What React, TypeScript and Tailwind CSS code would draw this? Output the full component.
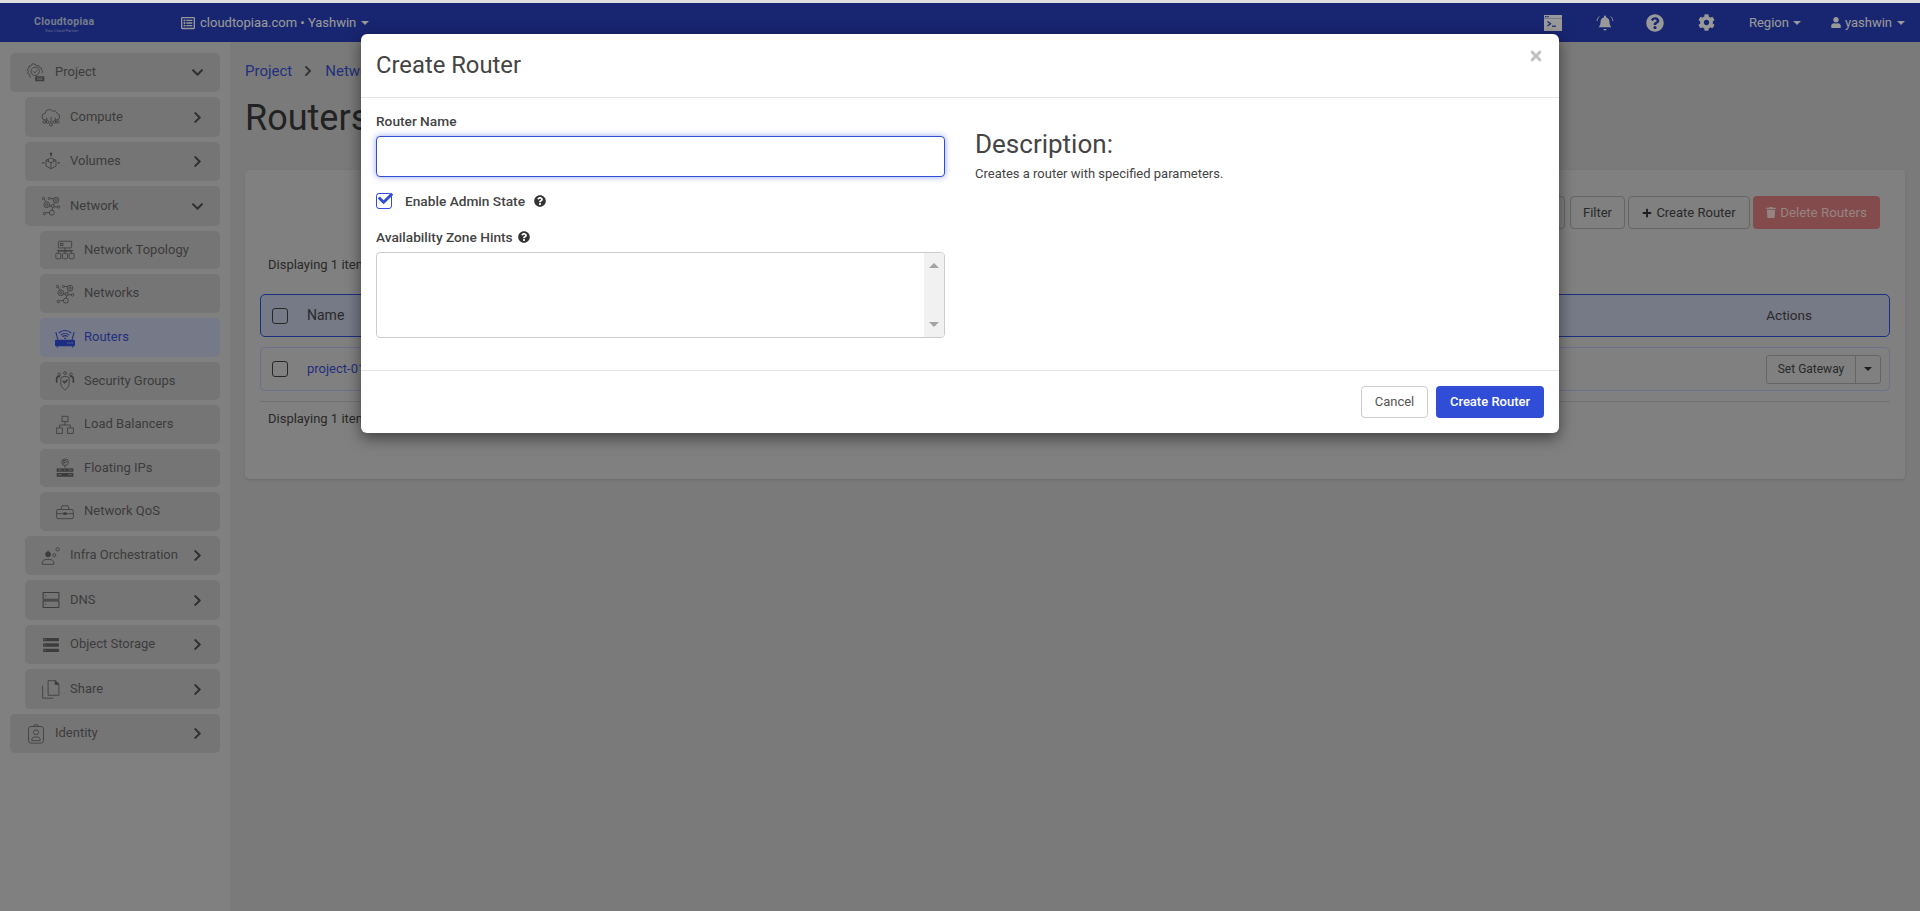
import type { ReactNode } from "react";
import {
  FaCheck,
  FaChevronDown,
  FaChevronRight,
  FaCog,
  FaPlus,
  FaQuestionCircle,
  FaRegListAlt,
  FaTimes,
  FaTrash,
  FaUser,
} from "react-icons/fa";

const font = "font-['Roboto',sans-serif]";

function Ico({ children, className = "" }: { children: ReactNode; className?: string }) {
  return (
    <svg
      viewBox="0 0 24 24"
      fill="none"
      stroke="currentColor"
      strokeWidth="1"
      className={`w-[20px] h-[20px] shrink-0 ${className}`}
    >
      {children}
    </svg>
  );
}

const ProjectIcon = () => (
  <Ico>
    <path d="M11 1.500l1.500 2 2.500-.5 1 2.400 2.500.6-.2 2.500 2 1.500-1.500 2M6 17l-1.500-1-.2-2.500-2.300-1 .8-2.500L1.500 8l2-1.500L3.500 4l2.500-.5L7.500 1l3.500.5" />
    <circle cx="11" cy="10" r="5" />
    <path d="M8.500 10l2 2 3-3.500" />
    <rect x="11" y="16" width="11" height="6" rx="1" fill="currentColor" stroke="none" />
    <path d="M13 18h7M13 20h7" stroke="#ccc" strokeWidth="0.8" />
  </Ico>
);

const ComputeIcon = () => (
  <Ico>
    <path d="M7 15.500H5.500a4 4 0 0 1-.5-8 5 5 0 0 1 9-2.500 4.500 4.500 0 0 1 5.500 3 3.800 3.800 0 0 1-1 7.500H17" />
    <path d="M12 12v7M7 13v3.500M17 13v3.500" />
    <circle cx="12" cy="21" r="1.800" />
    <circle cx="4" cy="18" r="1.600" />
    <circle cx="8" cy="18" r="1.600" />
    <circle cx="16" cy="18" r="1.600" />
    <circle cx="20" cy="18" r="1.600" />
  </Ico>
);

const VolumeIcon = () => (
  <Ico>
    <path d="M12 7l6 3v7l-6 3-6-3v-7z" />
    <path d="M6 10l6 3 6-3M12 13v7M9 8.500v3M15 8.500v3" />
    <path d="M12 1.500v3.500M1.500 13H4M20 13h2.500" strokeWidth="1.600" />
    <circle cx="12" cy="2" r="1" fill="currentColor" />
  </Ico>
);

const NetworkIcon = () => (
  <Ico>
    <circle cx="18" cy="5" r="3.500" />
    <circle cx="18" cy="5" r="1.400" />
    <circle cx="7" cy="10.500" r="3.500" />
    <circle cx="7" cy="10.500" r="1.400" />
    <circle cx="13" cy="20" r="3" />
    <circle cx="3" cy="3" r="1.500" />
    <circle cx="10" cy="3" r="1.300" />
    <circle cx="21" cy="13" r="1.500" />
    <circle cx="4" cy="21" r="1.500" />
    <circle cx="14" cy="12" r="1.800" />
    <path d="M4 4l2 3M11 3h4M10 12l2.500 0M16 8l-1 3M15.500 13l4 0M14 14l-.5 3M10.500 20H5.500" />
  </Ico>
);

const TopologyIcon = () => (
  <Ico>
    <rect x="4" y="1.500" width="16" height="8" rx="1" />
    <rect x="6.500" y="4" width="3" height="2.500" />
    <path d="M12 9.500v4M4 16v-2.500h16V16M12 13.500V16M2 12.500h20" />
    <rect x="1" y="16" width="6" height="6.500" rx="1" />
    <rect x="9" y="16" width="6" height="6.500" rx="1" />
    <rect x="17" y="16" width="6" height="6.500" rx="1" />
  </Ico>
);

const RouterIcon = () => (
  <svg viewBox="0 0 24 24" fill="none" stroke="#304dd8" strokeWidth="1.300" className="w-[20px] h-[20px] shrink-0">
    <path d="M7 8.500a7.500 7.500 0 0 1 10 0M9 10.500a4.500 4.500 0 0 1 6 0M4.500 6a11 11 0 0 1 15 0" />
    <path d="M11 12.500h2" strokeWidth="1.600" />
    <path d="M1 5l2.500 9M23 5l-2.500 9" />
    <rect x="0" y="14" width="24" height="8" rx="1.500" fill="#304dd8" stroke="none" />
    <path d="M15 18h1M17.500 18h1M20 18h1" stroke="#fff" />
    <path d="M3 22v1.500M21 22v1.500" strokeWidth="1.600" />
  </svg>
);

const SecurityIcon = () => (
  <Ico>
    <circle cx="12" cy="2.500" r="1.700" />
    <circle cx="5" cy="4" r="1.700" />
    <circle cx="19" cy="4" r="1.700" />
    <path d="M7 8c3-2 7-2 10 0v7c0 4-3 6-5 8-2-2-5-4-5-8z" />
    <path d="M2 14V9c0-2 2-3 4-2.500M22 14V9c0-2-2-3-4-2.500" strokeWidth="2" />
    <path d="M9.500 12l2 2 3.500-3.500" strokeWidth="2" />
  </Ico>
);

const LoadIcon = () => (
  <Ico>
    <rect x="8.500" y="1.500" width="7" height="6.500" />
    <rect x="2" y="15.500" width="7" height="6.500" />
    <rect x="15" y="15.500" width="7" height="6.500" />
    <path d="M12 8v4M5.500 15.500V12h13v3.500" />
  </Ico>
);

const FloatingIcon = () => (
  <Ico>
    <circle cx="12" cy="5" r="4" />
    <path d="M10.500 7V3h2a1 1 0 0 1 0 2.500h-2M12 9v3" />
    <rect x="2" y="12.500" width="20" height="4" fill="currentColor" stroke="none" />
    <rect x="2" y="18" width="20" height="4.500" fill="currentColor" stroke="none" />
    <path d="M4 14.500h4M11 14.500h2M16 14.500h4M4 20h4M16 20h4" stroke="#ccc" strokeWidth="0.8" />
  </Ico>
);

const QosIcon = () => (
  <Ico>
    <path d="M7 9l1.500-4.500h7L17 9" />
    <rect x="2" y="9" width="20" height="11" rx="1.500" />
    <path d="M2 14h8M14 14h8" />
    <rect x="10.500" y="13" width="3" height="2" fill="currentColor" />
  </Ico>
);

const InfraIcon = () => (
  <Ico>
    <circle cx="8.500" cy="10" r="3" fill="currentColor" />
    <path d="M1.500 22v-2c0-3 3-4 7-4s7 1 7 4v2z" />
    <path d="M8.500 5.500v1.500" />
    <circle cx="20" cy="4" r="2" />
    <circle cx="16" cy="11" r="1.800" />
  </Ico>
);

const DnsIcon = () => (
  <Ico>
    <rect x="2.500" y="3" width="19" height="8" rx="0.500" strokeWidth="1.300" />
    <rect x="2.500" y="13" width="19" height="8" rx="0.500" strokeWidth="1.300" />
    <path d="M5 7h1.500M5 17h1.500" />
  </Ico>
);

const StorageIcon = () => (
  <svg viewBox="0 0 24 24" fill="currentColor" className="w-[20px] h-[20px] shrink-0">
    <rect x="2.500" y="3.500" width="19" height="4" rx="0.500" />
    <rect x="2.500" y="10" width="19" height="4" rx="0.500" />
    <rect x="2.500" y="16.500" width="19" height="4" rx="0.500" />
    <path d="M4 5.500h1.500M4 12h1.500M4 18.500h1.500" stroke="#ccc" />
  </svg>
);

const ShareIcon = () => (
  <Ico>
    <path d="M8.500 2h9l4 4v13.500h-13z" />
    <path d="M17 2v4.500h4.500" fill="currentColor" />
    <path d="M2 8v15h13" />
  </Ico>
);

const IdentityIcon = () => (
  <Ico>
    <rect x="3" y="3" width="18" height="20" rx="3" />
    <path d="M9 3l1-2h4l1 2" />
    <circle cx="12" cy="10" r="3" />
    <path d="M7 20v-1.500c0-2 2-3 5-3s5 1 5 3V20z" />
  </Ico>
);

const TerminalIcon = () => (
  <svg viewBox="0 0 18 16" className="w-[18px] h-[16px]" fill="currentColor">
    <path fillRule="evenodd" d="M0 0h18v16H0zM0 3.500v12.500h18V3.500z" />
    <rect x="0" y="3.500" width="18" height="12.500" />
    <rect x="1" y="1" width="1.400" height="1.400" fill="#283fbb" />
    <rect x="3.300" y="1" width="1.400" height="1.400" fill="#283fbb" />
    <path d="M3.500 6.500l3 2.200-3 2.200" stroke="#283fbb" strokeWidth="1.300" fill="none" />
    <rect x="8" y="10.600" width="4" height="1.200" fill="#283fbb" />
  </svg>
);

const BellIcon = () => (
  <svg viewBox="0 0 18 18" className="w-[18px] h-[18px]" fill="currentColor">
    <path d="M9 1.500a1 1 0 0 1 1 1v.700c2.300.5 3.500 2.500 3.500 5 0 2.500 1 4 2 5H2.500c1-1 2-2.500 2-5 0-2.500 1.200-4.500 3.500-5V2.500a1 1 0 0 1 1-1z" />
    <path d="M7.500 15h3a1.500 1.500 0 0 1-3 0z" />
    <path d="M3.300 2.500C2 3.700 1.300 5.200 1 7M14.700 2.500C16 3.700 16.700 5.200 17 7" stroke="currentColor" strokeWidth="1" fill="none" />
  </svg>
);

const Caret = ({ className = "" }: { className?: string }) => (
  <span
    className={`inline-block w-0 h-0 border-x-[4px] border-x-transparent border-t-[4px] border-t-current ${className}`}
  />
);

type SideItem = {
  label: string;
  icon: ReactNode;
  level: 0 | 1 | 2;
  h: string;
  open?: boolean;
  active?: boolean;
};

const sideItems: SideItem[] = [
  { label: "Project", icon: <ProjectIcon />, level: 0, h: "h-[39px]", open: true },
  { label: "Compute", icon: <ComputeIcon />, level: 1, h: "h-[40px]" },
  { label: "Volumes", icon: <VolumeIcon />, level: 1, h: "h-[39px]" },
  { label: "Network", icon: <NetworkIcon />, level: 1, h: "h-[40px]", open: true },
  { label: "Network Topology", icon: <TopologyIcon />, level: 2, h: "h-[38px]" },
  { label: "Networks", icon: <NetworkIcon />, level: 2, h: "h-[39px]" },
  { label: "Routers", icon: <RouterIcon />, level: 2, h: "h-[39px]", active: true },
  { label: "Security Groups", icon: <SecurityIcon />, level: 2, h: "h-[38px]" },
  { label: "Load Balancers", icon: <LoadIcon />, level: 2, h: "h-[39px]" },
  { label: "Floating IPs", icon: <FloatingIcon />, level: 2, h: "h-[38px]" },
  { label: "Network QoS", icon: <QosIcon />, level: 2, h: "h-[39px]" },
  { label: "Infra Orchestration", icon: <InfraIcon />, level: 1, h: "h-[39px]" },
  { label: "DNS", icon: <DnsIcon />, level: 1, h: "h-[40px]" },
  { label: "Object Storage", icon: <StorageIcon />, level: 1, h: "h-[39px]" },
  { label: "Share", icon: <ShareIcon />, level: 1, h: "h-[40px]" },
  { label: "Identity", icon: <IdentityIcon />, level: 0, h: "h-[39px]" },
];

function SidebarRow({ item }: { item: SideItem }) {
  const indent = item.level === 0 ? "ml-0 pl-[16px]" : item.level === 1 ? "ml-[15px] pl-[16px]" : "ml-[30px] pl-[15px]";
  return (
    <div
      className={`${item.h} flex items-center gap-[9px] rounded-[5px] pr-[16px] text-[13px] ${indent} ${
        item.active ? "bg-[#c5cbe3] text-[#3a4fd0]" : "bg-[#c4c4c4] text-[#646464]"
      }`}
    >
      {item.icon}
      <span className="flex-1 whitespace-nowrap -mt-[1px]">{item.label}</span>
      {item.level < 2 &&
        (item.open ? (
          <FaChevronDown className="w-[13px] h-[13px] text-[#505050]" />
        ) : (
          <FaChevronRight className="w-[11px] h-[13px] mr-[1px] text-[#505050]" />
        ))}
    </div>
  );
}

function TableCheckbox() {
  return <span className="w-[16px] h-[16px] rounded-[3px] border-[1.5px] border-[#444] shrink-0" />;
}

export default function App() {
  return (
    <div className={`${font} w-[1920px] h-[911px] overflow-hidden bg-[#cccccc]`}>
      <div className="h-[3px] bg-[#dedede]" />
      <div className="relative h-[908px]">
        {/* page behind the dialog */}
        <header className="h-[39px] bg-[#283fbb] flex items-center text-white">
          <div className="w-[181px] pl-[34px] flex flex-col items-start leading-none">
            <span className="text-[10.500px] mt-[5px] font-bold text-[#c0cfe8] tracking-[0.35px]">Cloudtopiaa</span>
            <span className="text-[4px] mt-[2px] pl-[11px] text-[#a8b8f0]">Your Cloud Partner</span>
          </div>
          <div className="flex items-center text-[13px]">
            <FaRegListAlt className="w-[14px] h-[14px] mr-[5px]" />
            <span>cloudtopiaa.com • Yashwin</span>
            <Caret className="ml-[5px]" />
          </div>
          <div className="flex-1" />
          <div className="flex items-center">
            <TerminalIcon />
            <span className="ml-[34px] flex">
              <BellIcon />
            </span>
            <FaQuestionCircle className="w-[18px] h-[18px] ml-[32px]" />
            <FaCog className="w-[17px] h-[17px] ml-[34px]" />
            <span className="ml-[34px] text-[13px]">Region</span>
            <Caret className="ml-[4px]" />
            <FaUser className="w-[10px] h-[11px] ml-[30px]" />
            <span className="ml-[4px] text-[13px]">yashwin</span>
            <Caret className="ml-[5px] mr-[15px]" />
          </div>
        </header>

        <div className="flex h-[869px]">
          <aside className="w-[230px] shrink-0 bg-[#d5d5d5] pl-[10px] pr-[10px] pt-[11px] flex flex-col gap-[5px]">
            {sideItems.map((item) => (
              <SidebarRow key={item.label} item={item} />
            ))}
          </aside>

          <main className="flex-1 px-[15px]">
            <div className="h-[28px] mt-[15px] flex items-center text-[15px] text-[#3a4fd0]">
              <span>Project</span>
              <FaChevronRight className="w-[10px] h-[12px] ml-[11px] mr-[12px] text-[#555]" />
              <span>Network</span>
            </div>
            <h1 className="mt-[8px] h-[50px] text-[36px] leading-[50px] text-[#393939] font-normal">Routers</h1>
            <section className="mt-[27px] h-[309px] bg-[#d5d5d5] rounded-[4px] px-[15px] pt-[26px] shadow-sm">
              <div className="flex justify-end gap-[3px] pr-[10px] text-[13px] text-[#464646]">
                <div className="w-[200px] h-[33px] border border-[#a8a8a8] rounded-r-[4px] mr-[2px]" />
                <button className="h-[33px] w-[55px] border border-[#a8a8a8] rounded-[4px]">Filter</button>
                <button className="h-[33px] w-[122px] border border-[#a8a8a8] rounded-[4px] flex items-center justify-center gap-[4px]">
                  <FaPlus className="w-[10px] h-[10px] text-[#333]" />
                  Create Router
                </button>
                <button className="h-[33px] w-[127px] bg-[#da7d7d] text-[#fbdcdc] rounded-[4px] flex items-center justify-center gap-[4px] text-[13.300px]">
                  <FaTrash className="w-[10px] h-[11px]" />
                  Delete Routers
                </button>
              </div>
              <div className="mt-[27px] h-[18px] pl-[8px] text-[13px] leading-[18px] text-[#464646]">Displaying 1 item</div>
              <div className="mt-[20px] h-[43px] flex items-center border border-[#304dd8] rounded-[5px] bg-[#c5cbdf] text-[14px] text-[#464646]">
                <span className="ml-[11px] flex">
                  <TableCheckbox />
                </span>
                <span className="ml-[19px] -mt-[1px]">Name</span>
                <span className="ml-auto mr-[77px] -mt-[1px] text-[13.500px]">Actions</span>
              </div>
              <div className="mt-[10px] h-[44px] flex items-center border border-[#b5bbe8] rounded-[5px] text-[13px] text-[#3a4fd0]">
                <span className="ml-[11px] flex">
                  <TableCheckbox />
                </span>
                <span className="ml-[19px]">project-01</span>
                <div className="ml-auto mr-[8px] flex h-[29px] text-[12px] text-[#464646] border border-[#a8a8a8] rounded-[3px]">
                  <span className="w-[89px] flex items-center justify-center border-r border-[#a8a8a8]">Set Gateway</span>
                  <span className="w-[24px] flex items-center justify-center text-[#333]">
                    <Caret />
                  </span>
                </div>
              </div>
              <div className="mt-[10px] border-t border-[#bcbcbc] pt-[8px] pl-[8px] text-[13px] leading-[18px] text-[#464646]">
                Displaying 1 item
              </div>
            </section>
          </main>
        </div>

        {/* backdrop and dialog */}
        <div className="absolute inset-0 bg-black/40" />
        <div className="absolute inset-0 flex justify-center items-start pt-[31px]">
          <div className="relative w-[1198px] h-[399px] bg-white rounded-[6px] shadow-[0_5px_15px_rgba(0,0,0,0.5)] flex flex-col">
            <div className="h-[64px] shrink-0 border-b border-[#e5e5e5] flex items-center justify-between pl-[15px] pr-[15px]">
              <h2 className="text-[23.800px] text-[#444] font-normal">Create Router</h2>
              <FaTimes className="w-[16px] h-[16px] -mt-[20px] text-[#c0c0c0]" />
            </div>
            <div className="flex-1 flex px-[15px] text-[#333]">
              <div className="w-[569px] shrink-0">
                <label className="block mt-[14px] h-[18px] text-[13.700px] leading-[18px] font-medium text-[#444]">Router Name</label>
                <input className="block mt-[6px] w-full h-[41px] bg-white border border-[#304dd8] rounded-[4px] outline-none shadow-[0_0_6px_rgba(48,77,216,0.5)]" />
                <div className="mt-[15px] h-[18px] flex items-center text-[13.700px] font-medium text-[#444]">
                  <span className="relative w-[16px] h-[16px] border-[1.5px] border-[#304dd8] rounded-[3px] shrink-0">
                    <FaCheck className="absolute left-[1px] -top-[3px] w-[15px] h-[15px] text-[#304dd8]" />
                  </span>
                  <span className="ml-[13px]">Enable Admin State</span>
                  <FaQuestionCircle className="ml-[9px] w-[12px] h-[12px] text-[#333]" />
                </div>
                <div className="mt-[18px] h-[18px] flex items-center text-[13.700px] font-medium text-[#444]">
                  Availability Zone Hints
                  <FaQuestionCircle className="ml-[5px] w-[12px] h-[12px] text-[#333]" />
                </div>
                <div className="mt-[6px] h-[86px] border border-[#ccc] rounded-[4px] flex justify-end overflow-hidden">
                  <div className="w-[20px] bg-[#f1f1f1] flex flex-col items-center justify-between py-[10px] text-[#a3a3a3]">
                    <span className="w-0 h-0 border-x-[5px] border-x-transparent border-b-[5px] border-b-current" />
                    <span className="w-0 h-0 border-x-[5px] border-x-transparent border-t-[5px] border-t-current" />
                  </div>
                </div>
              </div>
              <div className="ml-[30px] flex-1 pt-[32px]">
                <h3 className="text-[26px] leading-[28px] font-normal text-[#444]">Description:</h3>
                <p className="mt-[7px] text-[13px] leading-[17px] text-[#444]">Creates a router with specified parameters.</p>
              </div>
            </div>
            <div className="h-[63px] shrink-0 border-t border-[#e5e5e5] flex items-center justify-end gap-[8px] pr-[15px] text-[13px]">
              <button className="w-[67px] h-[32px] border border-[#ccc] rounded-[4px] text-[#555]">Cancel</button>
              <button className="w-[108px] h-[32px] bg-[#304dd8] rounded-[4px] text-white font-medium">Create Router</button>
            </div>
          </div>
        </div>
      </div>
    </div>
  );
}
